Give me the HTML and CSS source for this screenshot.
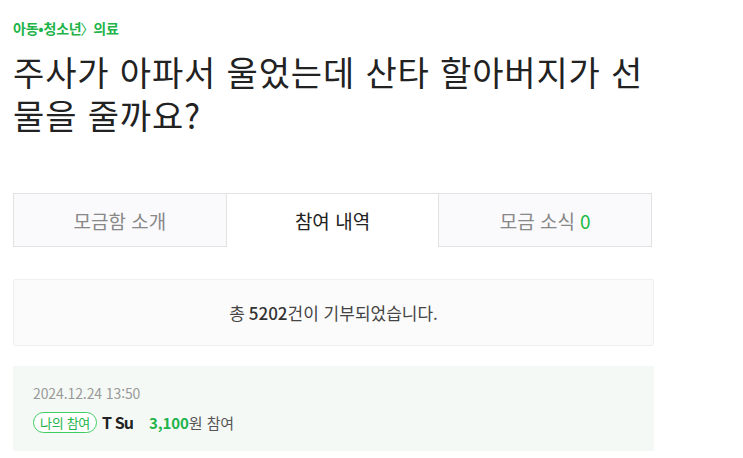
FILE: index.html
```html
<!DOCTYPE html>
<html lang="ko">
<head>
<meta charset="utf-8">
<link rel="stylesheet" href="styles.css">
</head>
<body>
<div class="page">
  <div class="crumb">아동•청소년<span class="sep">〉</span>의료</div>
  <h1 class="title"><span class="tline">주사가 아파서 울었는데 산타 할아버지가 선</span><span class="tline">물을 줄까요?</span></h1>
  <div class="tabs">
    <div class="tab">모금함 소개</div>
    <div class="tab active">참여 내역</div>
    <div class="tab">모금 소식 <span class="num">0</span></div>
  </div>
  <div class="summary">총 <b>5202</b>건이 기부되었습니다.</div>
  <div class="entry">
    <div class="date">2024.12.24 13:50</div>
    <div class="line">
      <span class="badge">나의 참여</span>
      <span class="name">T Su</span>
      <span class="amount"><b>3,100</b>원 참여</span>
    </div>
  </div>
</div>
</body>
</html>
```
FILE: styles.css
```css
* { box-sizing: border-box; }
body {
  margin: 0;
  background: #fff;
  font-family: "Noto Sans CJK KR", "Noto Sans", sans-serif;
  color: #222;
}
.page {
  padding: 15px 89px 0 13px;
}
.crumb {
  font-size: 14px;
  font-weight: 700;
  color: #1eb44a;
  letter-spacing: -0.2px;
  line-height: 26px;
}
.crumb .sep { font-weight: 400; margin: 0 -1px; }
.title {
  margin: 9px 0 0;
  font-size: 34px;
  font-weight: 400;
  line-height: 43px;
  letter-spacing: 0.85px;
  color: #222;
}
.tline { display: block; white-space: nowrap; }
.tabs {
  display: flex;
  margin-top: 57px;
  width: 639px;
}
.tab {
  flex: 1;
  height: 54px;
  display: flex;
  align-items: center;
  justify-content: center;
  font-size: 19px;
  color: #888;
  background: #fafafc;
  border: 1px solid #e2e2e2;
}
.tab + .tab { border-left: none; }
.tab.active {
  background: #fff;
  color: #222;
  border-bottom: none;
}
.tab .num { color: #22bb44; margin-left: 5px; }
.summary {
  margin-top: 32px;
  height: 67px;
  display: flex;
  align-items: center;
  justify-content: center;
  background: #fbfbfb;
  border: 1px solid #efefef;
  border-radius: 2px;
  font-size: 17px;
  color: #444;
}
.summary b { font-weight: 500; color: #333; margin: 0 0 0 4px; }
.entry {
  margin-top: 20px;
  background: #f5f9f6;
  height: 85px;
  padding: 18px 20px 0;
}
.date {
  font-size: 14px;
  color: #999;
  letter-spacing: -0.1px;
  line-height: 19px;
}
.line {
  display: flex;
  align-items: center;
  margin-top: 7px;
}
.badge {
  border: 1px solid #3fcc63;
  border-radius: 11px;
  color: #1eb44a;
  font-size: 13px;
  letter-spacing: -0.3px;
  padding: 0 6px;
  height: 21px;
  line-height: 19px;
  background: #fff;
}
.name {
  margin-left: 5px;
  font-size: 16px;
  font-weight: 700;
  color: #222;
  letter-spacing: -0.9px;
}
.amount {
  margin-left: 16px;
  font-size: 15px;
  color: #555;
  letter-spacing: -0.1px;
}
.amount b { color: #1eb44a; font-weight: 700; }
```
